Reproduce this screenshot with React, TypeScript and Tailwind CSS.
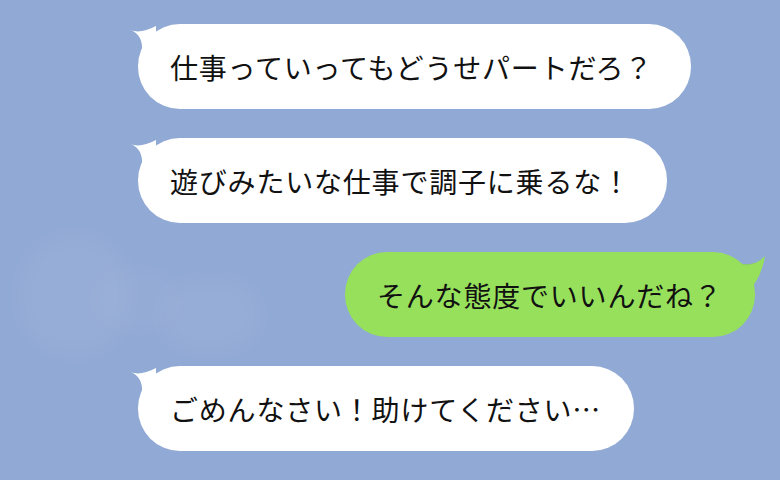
import React from "react";

type Msg = { text: string; mine?: boolean; width: number };

const messages: Msg[] = [
  { text: "仕事っていってもどうせパートだろ？", width: 553 },
  { text: "遊びみたいな仕事で調子に乗るな！", width: 529 },
  { text: "そんな態度でいいんだね？", mine: true, width: 410 },
  { text: "ごめんなさい！助けてください…", width: 496 },
];

function LeftTail() {
  return (
    <svg
      className="absolute left-[-12px] top-0"
      width="30"
      height="28"
      viewBox="0 0 30 28"
    >
      <path d="M2 5 Q13 11 30 2 L30 28 L16 28 L16 22 Q15 9 2 5 Z" fill="#ffffff" />
    </svg>
  );
}

function RightTail() {
  return (
    <svg
      className="absolute right-[-14px] top-0"
      width="28"
      height="36"
      viewBox="0 0 28 36"
    >
      <path d="M0 12 Q14 15 24 4 Q21 22 12 34 L0 34 Z" fill="#97e05c" />
      <path d="M-2 12 Q8 14 14 11" stroke="#8ccf58" strokeWidth="0.8" fill="none" />
    </svg>
  );
}

function Bubble({ msg }: { msg: Msg }) {
  const base =
    "relative h-[85px] flex items-center px-[32px] rounded-[42px] text-[28px] tracking-[0.8px] text-[#111111] whitespace-nowrap";
  if (msg.mine) {
    return (
      <div className="self-end mr-[25px] relative">
        <RightTail />
        <div className={`${base} bg-[#97e05c]`} style={{ width: msg.width }}>
          {msg.text}
        </div>
      </div>
    );
  }
  return (
    <div className="ml-[138px] relative self-start">
      <LeftTail />
      <div className={`${base} bg-white`} style={{ width: msg.width }}>
        {msg.text}
      </div>
    </div>
  );
}

export default function App() {
  return (
    <div
      className="relative w-[780px] h-[480px] overflow-hidden bg-[#91a9d5]"
      style={{ fontFamily: '"Noto Sans CJK JP", "Noto Sans", sans-serif' }}
    >
      {/* faint clouds in the wallpaper */}
      <div className="absolute left-[20px] top-[235px] w-[110px] h-[120px] rounded-full bg-white/[0.05] blur-[10px]" />
      <div className="absolute left-[160px] top-[280px] w-[100px] h-[70px] rounded-full bg-white/[0.05] blur-[10px]" />
      <div className="absolute left-[90px] top-[270px] w-[90px] h-[60px] rounded-full bg-white/[0.03] blur-[10px]" />

      <div className="relative flex flex-col pt-[24px] gap-[29px]">
        {messages.map((m, i) => (
          <Bubble key={i} msg={m} />
        ))}
      </div>
    </div>
  );
}
